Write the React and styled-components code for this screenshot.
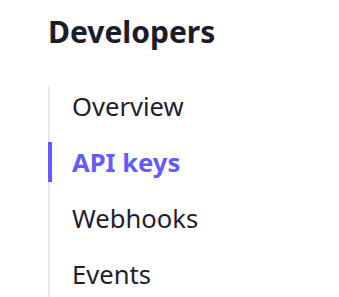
import React from 'react';
import styled, { createGlobalStyle } from 'styled-components';

const GlobalStyle = createGlobalStyle`
    html, body {
        margin: 0;
        padding: 0;
        background: #ffffff;
    }
    body {
        font-family: "Noto Sans", "Open Sans", sans-serif;
    }
`

const Sidebar = styled.nav`
    padding: 12px 0 0 48px;
    height: 297px;
    box-sizing: border-box;
    overflow: hidden;
`

const Heading = styled.h2`
    margin: 0;
    font-size: 30px;
    line-height: 40px;
    font-weight: 700;
    color: #1c1b2b;
`

const List = styled.ul`
    list-style: none;
    margin: 34px 0 0;
    padding: 0 0 40px;
    border-left: 2px solid #e6e9ef;
    display: flex;
    flex-direction: column;
    gap: 16px;
`

const Item = styled.li`
    position: relative;
    height: 40px;
    display: flex;
    align-items: center;
    padding-left: 22px;
    font-size: 25.6px;
    font-weight: ${p => (p.$active ? 700 : 400)};
    color: ${p => (p.$active ? '#635bff' : '#1f1e2e')};

    &::before {
        content: '';
        display: ${p => (p.$active ? 'block' : 'none')};
        position: absolute;
        left: -2px;
        top: 0;
        bottom: 0;
        width: 4px;
        background: #635bff;
    }
`

const links = ['Overview', 'API keys', 'Webhooks', 'Events']

const App = () => {
    return (
        <>
            <GlobalStyle />
            <Sidebar>
                <Heading>Developers</Heading>
                <List>
                    {links.map(l => (
                        <Item key={l} $active={l === 'API keys'}>{l}</Item>
                    ))}
                </List>
            </Sidebar>
        </>
    );
}

export default App
